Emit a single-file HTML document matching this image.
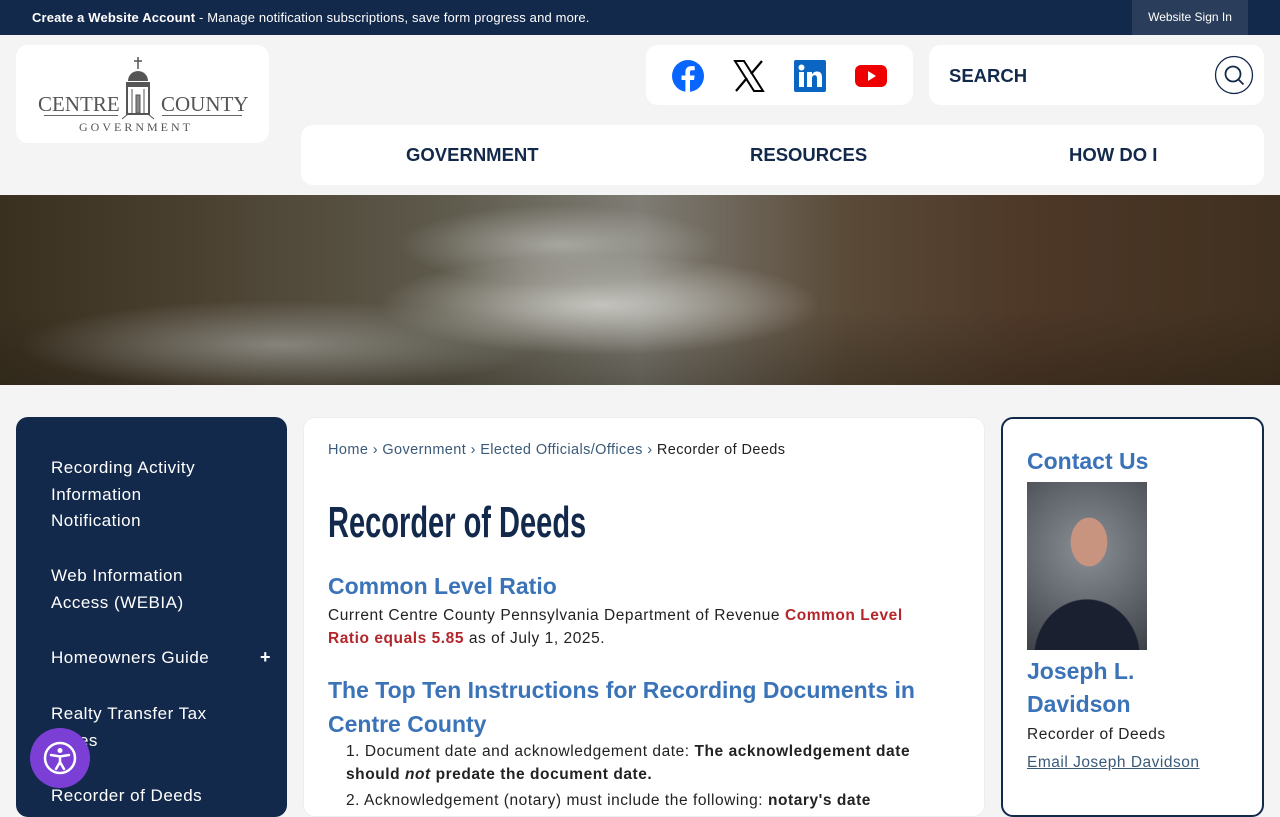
<!DOCTYPE html>
<html><head><meta charset="utf-8"><style>
*{margin:0;padding:0;box-sizing:border-box}
body{width:1280px;height:800px;overflow:hidden;background:#f4f4f4;font-family:"Liberation Sans",sans-serif;position:relative}
.top{position:absolute;left:0;top:0;width:1280px;height:35px;background:#13294b;color:#fff;font-size:13px}
.top .msg{position:absolute;left:32px;top:10px;letter-spacing:0.15px}
.top .sign{position:absolute;left:1132px;top:0;width:116px;height:35px;background:#2a3d5a;font-size:12px;text-align:center;line-height:35px}
.box{position:absolute;background:#fff;border-radius:12px}
.nav span{position:absolute;top:19px;font-weight:bold;font-size:18.5px;color:#13294b}
.hero{position:absolute;left:0;top:195px;width:1280px;height:190px;background:
radial-gradient(ellipse 220px 50px at 600px 110px,rgba(215,215,210,.8),transparent),
radial-gradient(ellipse 160px 40px at 560px 50px,rgba(190,190,185,.7),transparent),
radial-gradient(ellipse 260px 45px at 280px 150px,rgba(160,160,155,.7),transparent),
linear-gradient(180deg,rgba(0,0,0,0) 60%,rgba(30,25,15,.35)),
linear-gradient(90deg,#3a3020 0%,#4a4030 15%,#5e5a4c 35%,#7e7c74 50%,#5a4a38 66%,#4e3828 80%,#40301f 100%)}
.side{position:absolute;left:16px;top:417px;width:271px;height:400px;background:#13294b;border-radius:12px;color:#fff;font-size:17px;letter-spacing:.5px;line-height:26.5px}
.side div{position:absolute;left:35px}
.main{position:absolute;left:303px;top:417px;width:682px;height:400px;background:#fff;border-radius:12px;border:1px solid #eee}
.crumb{position:absolute;left:24px;top:24px;font-size:14.5px;color:#3a5a7a;letter-spacing:.4px}
h1{position:absolute;left:24px;top:80px;font-size:44px;font-weight:bold;color:#13294b;transform:scaleX(.66);transform-origin:left;white-space:nowrap}
h2{position:absolute;left:24px;font-size:23px;color:#3a73b8;font-weight:bold;line-height:34px}
p{position:absolute;left:24px;font-size:15.5px;color:#222;line-height:22.5px;width:615px;letter-spacing:.55px}
.red{color:#b3262b;font-weight:bold}
.contact{position:absolute;left:1001px;top:417px;width:263px;height:400px;background:#fff;border:2px solid #13294b;border-radius:12px}
</style></head><body>
<div class="top"><span class="msg"><b>Create a Website Account</b> - Manage notification subscriptions, save form progress and more.</span><div class="sign">Website Sign In</div></div>

<div class="box" style="left:16px;top:45px;width:253px;height:98px">
 <div style="position:absolute;left:22px;top:47px;font-family:'Liberation Serif',serif;font-size:21px;color:#555">CENTRE</div>
 <div style="position:absolute;left:145px;top:47px;font-family:'Liberation Serif',serif;font-size:21px;color:#555">COUNTY</div>
 <div style="position:absolute;left:63px;top:75px;font-family:'Liberation Serif',serif;font-size:12px;letter-spacing:3px;color:#555">GOVERNMENT</div>
 <div style="position:absolute;left:28px;top:70px;width:74px;border-top:1px solid #666"></div>
 <div style="position:absolute;left:146px;top:70px;width:80px;border-top:1px solid #666"></div>
 <svg style="position:absolute;left:102px;top:10px" width="40" height="65" viewBox="0 0 40 65"><path d="M20 2v12M16 6h8" stroke="#555" stroke-width="1.5"/><path d="M10 26a10 10 0 0 1 20 0z" fill="#555"/><rect x="8" y="27" width="24" height="4" fill="#555"/><rect x="9" y="31" width="22" height="28" fill="none" stroke="#555" stroke-width="2"/><path d="M14 34v24M26 34v24M18 40h4v18h-4z" stroke="#555" fill="#888"/><path d="M4 64l6-5h20l6 5" stroke="#555" fill="none"/></svg>
</div>

<div class="box" style="left:646px;top:45px;width:267px;height:60px">
 <svg style="position:absolute;left:26px;top:15px" width="32" height="32" viewBox="0 0 32 32"><circle cx="16" cy="16" r="16" fill="#0866ff"/><path d="M18 32V20h4l.6-4.5H18v-3c0-1.3.4-2.2 2.3-2.2h2.4v-4c-.4-.1-1.9-.2-3.5-.2-3.5 0-5.800 2.1-5.8 6v3.4H9.5V20h3.9v12z" fill="#fff"/></svg>
 <svg style="position:absolute;left:87px;top:15px" width="32" height="32" viewBox="0 0 32 32"><path d="M2 1h9l19 30h-9z" fill="none" stroke="#000" stroke-width="2"/><path d="M29 1L18 14M3 31l11-13" stroke="#000" stroke-width="2.2"/></svg>
 <svg style="position:absolute;left:148px;top:15px" width="32" height="32" viewBox="0 0 32 32"><rect width="32" height="32" rx="2" fill="#0a66c2"/><rect x="5" y="12" width="5" height="15" fill="#fff"/><circle cx="7.5" cy="7.5" r="3" fill="#fff"/><path d="M13 12h5v2.5c1-2 3-3 5-3 4 0 5 2.5 5 6V27h-5v-8.5c0-2-.5-3.3-2.3-3.3S18 16.5 18 18.5V27h-5z" fill="#fff"/></svg>
 <svg style="position:absolute;left:209px;top:19px" width="32" height="24" viewBox="0 0 32 24"><rect width="32" height="22" rx="6" fill="#e00" y="1"/><path d="M13 7v10l8-5z" fill="#fff"/></svg>
</div>

<div class="box" style="left:929px;top:45px;width:335px;height:60px">
 <span style="position:absolute;left:20px;top:20px;font-weight:bold;font-size:18.5px;color:#13294b">SEARCH</span>
 <svg style="position:absolute;left:285px;top:10px" width="40" height="40" viewBox="0 0 40 40"><circle cx="20" cy="20" r="18.5" fill="none" stroke="#13294b" stroke-width="1.3"/><circle cx="19" cy="19" r="7.5" fill="none" stroke="#13294b" stroke-width="1.8"/><path d="M24.5 24.5l5 5" stroke="#13294b" stroke-width="1.8"/></svg>
</div>

<div class="box nav" style="left:301px;top:125px;width:963px;height:60px">
 <span style="left:105px">GOVERNMENT</span><span style="left:449px">RESOURCES</span><span style="left:768px">HOW DO I</span>
</div>

<div class="hero"></div>

<div class="side">
 <div style="top:38px">Recording Activity<br>Information<br>Notification</div>
 <div style="top:146px">Web Information<br>Access (WEBIA)</div>
 <div style="top:228px">Homeowners Guide</div>
 <span style="position:absolute;left:244px;top:227px;font-size:18px;font-weight:bold">+</span>
 <div style="top:284px">Realty Transfer Tax<br>Rates</div>
 <div style="top:366px">Recorder of Deeds</div>
</div>
<div style="position:absolute;left:30px;top:728px;width:60px;height:60px;border-radius:50%;background:#7b3fd6"><svg width="60" height="60" viewBox="0 0 60 60"><circle cx="30" cy="30" r="15" fill="none" stroke="#fff" stroke-width="2.5"/><circle cx="30" cy="22.5" r="2.5" fill="#fff"/><path d="M21 27l9 1.5 9-1.5M30 28.5v6M30 34l-4 7M30 34l4 7" stroke="#fff" stroke-width="2.5" fill="none" stroke-linecap="round"/></svg></div>

<div class="main">
 <div class="crumb">Home › Government › Elected Officials/Offices › <span style="color:#222">Recorder of Deeds</span></div>
 <h1>Recorder of Deeds</h1>
 <h2 style="top:151px">Common Level Ratio</h2>
 <p style="top:187px">Current Centre County Pennsylvania Department of Revenue <span class="red">Common Level Ratio equals 5.85</span> as of July 1, 2025.</p>
 <h2 style="top:255px;width:640px">The Top Ten Instructions for Recording Documents in Centre County</h2>
 <p style="top:323px;left:42px;width:620px">1. Document date and acknowledgement date: <b>The acknowledgement date should <i>not</i> predate the document date.</b></p>
 <p style="top:372px;left:42px;width:640px">2. Acknowledgement (notary) must include the following: <b>notary's date</b></p>
</div>

<div class="contact">
 <div style="position:absolute;left:24px;top:29px;font-size:23px;font-weight:bold;color:#3a73b8">Contact Us</div>
 <div style="position:absolute;left:24px;top:63px;width:120px;height:168px;background:radial-gradient(ellipse 30px 40px at 62px 60px,#c89480 60%,transparent 62%),radial-gradient(ellipse 55px 60px at 60px 175px,#1a2030 95%,transparent 97%),radial-gradient(circle at 50% 40%,#8a8f96,#3e4248)"></div>
 <div style="position:absolute;left:24px;top:236px;font-size:23px;font-weight:bold;color:#3a73b8;line-height:33px">Joseph L.<br>Davidson</div>
 <div style="position:absolute;left:24px;top:307px;font-size:15.5px;color:#222;letter-spacing:.5px">Recorder of Deeds</div>
 <div style="position:absolute;left:24px;top:335px;font-size:15.5px;color:#3a5a7a;text-decoration:underline;letter-spacing:.5px">Email Joseph Davidson</div>
</div>
</body></html>
